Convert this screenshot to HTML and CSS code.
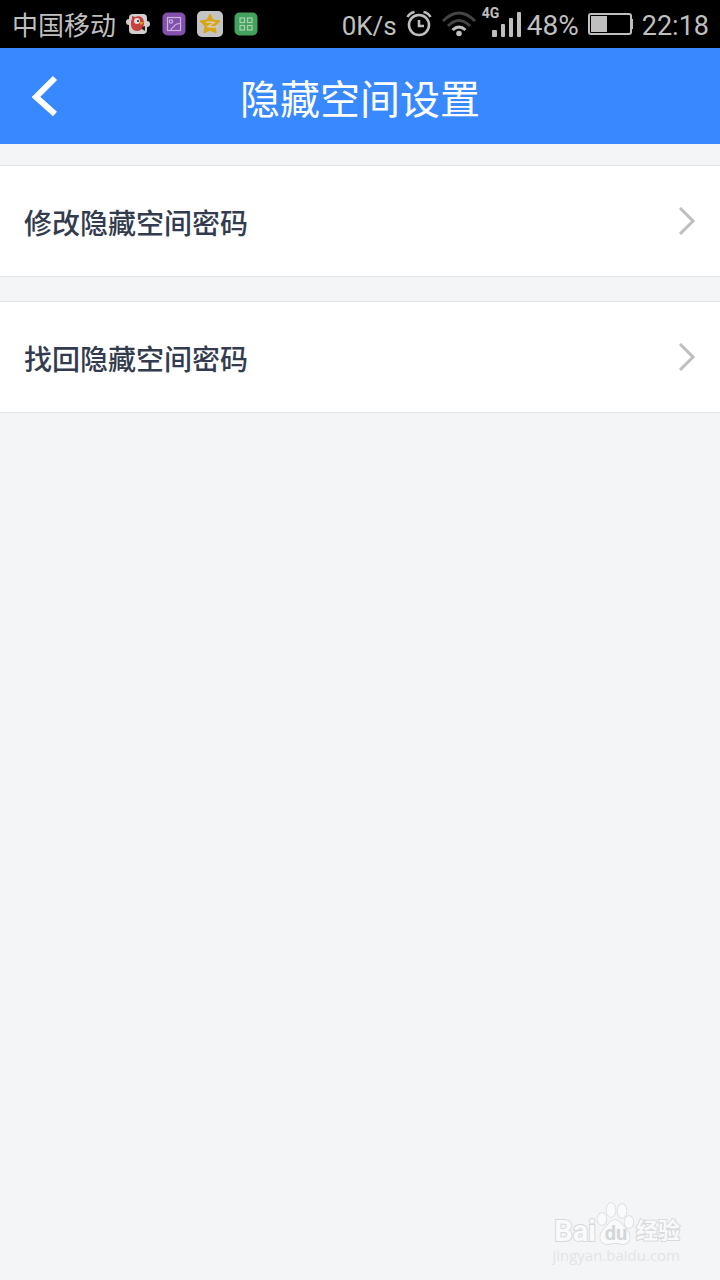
FILE: index.html
```html
<!DOCTYPE html>
<html lang="zh-CN">
<head>
<meta charset="utf-8">
<meta name="viewport" content="width=device-width, initial-scale=1">
<title>隐藏空间设置</title>
<link rel="stylesheet" href="styles.css">
</head>
<body>
<div class="status">
  <div class="status-left">
    <span class="carrier">中国移动</span>
    <svg width="24" height="24" viewBox="0 0 24 24" aria-hidden="true">
      <rect x="3" y="2" width="18" height="20" rx="4" fill="#cfcfcf"/>
      <circle cx="3" cy="10" r="3" fill="#cfcfcf"/><circle cx="21" cy="12" r="3" fill="#cfcfcf"/>
      <path d="M6 4l3 1c5-2 9 1 9 6s-3 8-7 8-6-3-6-7c0-2 0-4 1-5z" fill="#c8403c"/>
      <circle cx="11" cy="9" r="3" fill="#dedede"/>
      <circle cx="12" cy="9" r="1" fill="#222"/><path d="M13 10l5 0-3 3z" fill="#d9a020"/>
      <path d="M16 15l3-1v5l-3-2z" fill="#222"/>
    </svg>
    <svg width="24" height="24" viewBox="0 0 24 24" aria-hidden="true">
      <rect x="0.500" y="0.500" width="23" height="23" rx="5" fill="#8450ae"/>
      <g fill="none" stroke="#c9b3d9" stroke-width="1.200"><rect x="5.500" y="5.500" width="13" height="13"/><circle cx="9" cy="9.500" r="1.700"/><path d="M9 18.500c0-2 1-3 3-4 1-2 3-3 6-3"/></g>
    </svg>
    <svg class="star" width="26" height="26" viewBox="0 0 26 26" aria-hidden="true">
      <rect width="26" height="26" rx="5" fill="#c4c4c4"/>
      <path d="M13 3l3 6 7 1-5 5 1 7-6-3-6 3 1-7-5-5 7-1z" fill="#d9a515" stroke="#d9a515" stroke-linejoin="round"/>
      <path d="M9 11.500q4-1 8 0l-6 4q4 1 9 0" fill="none" stroke="#d4cdbb" stroke-width="1.500"/>
    </svg>
    <svg width="24" height="24" viewBox="0 0 24 24" aria-hidden="true">
      <rect x="0.500" y="0.500" width="23" height="23" rx="5" fill="#43a25c"/>
      <g fill="none" stroke="#a9d0b3" stroke-width="1.200"><rect x="6" y="6" width="4.500" height="4.500"/><rect x="13.500" y="6" width="4.500" height="4.500"/><rect x="6" y="13.500" width="4.500" height="4.500"/><rect x="13.500" y="13.500" width="4.500" height="4.500"/></g>
    </svg>
  </div>
  <div class="status-right">
    <span class="speed">0K/s</span>
    <svg class="alarm" width="26" height="28" viewBox="0 0 26 28" aria-label="闹钟">
      <g fill="none" stroke="#bfbfbf" stroke-width="2.600"><circle cx="13" cy="15" r="10"/><path d="M13 10v6h5M1.500 7q2-4 7-5M24.500 7q-2-4-7-5"/></g>
    </svg>
    <svg class="wifi" width="34" height="26" viewBox="0 0 34 26" aria-label="WLAN">
      <g fill="none" stroke-width="3"><path d="M1 10Q17-6 33 10M6 15Q17 4 28 15" stroke="#444"/><path d="M10.500 19Q17 13 23.500 19" stroke="#bfbfbf"/></g><circle cx="17" cy="22.500" r="2.800" fill="#bfbfbf"/>
    </svg>
    <span class="signal">
      <svg width="40" height="32" viewBox="0 0 40 32" aria-hidden="true"><g fill="#bfbfbf"><rect x="10" y="22" width="5" height="7" rx="1"/><rect x="19" y="16" width="4" height="13" rx="1"/><rect x="27" y="10" width="4" height="19" rx="1"/><rect x="35" y="4" width="4" height="25" rx="1"/></g></svg>
      <span class="network">4G</span>
    </span>
    <span class="percent">48%</span>
    <svg class="battery" width="46" height="22" viewBox="0 0 46 22" aria-hidden="true"><rect x="1" y="1" width="42" height="20" rx="2" fill="none" stroke="#bfbfbf" stroke-width="2"/><path d="M43 6h2v10h-2z" fill="#bfbfbf"/><path d="M3 3h16v16H3z" fill="#bfbfbf"/></svg>
    <time class="clock">22:18</time>
  </div>
</div>
<header class="header">
  <button class="back" type="button" aria-label="返回"><svg width="26" height="42" viewBox="0 0 26 42"><path d="M23 3L4 22l19 17" fill="none" stroke="#fff" stroke-width="6"/></svg></button>
  <h1 class="title">隐藏空间设置</h1>
</header>
<main class="list">
  <a class="row" href="#change"><span class="label">修改隐藏空间密码</span><svg width="18" height="28" viewBox="0 0 18 28" aria-hidden="true"><path d="M2 1l13 13L2 27" fill="none" stroke="#bfbfbf" stroke-width="3"/></svg></a>
  <a class="row" href="#recover"><span class="label">找回隐藏空间密码</span><svg width="18" height="28" viewBox="0 0 18 28" aria-hidden="true"><path d="M2 1l13 13L2 27" fill="none" stroke="#bfbfbf" stroke-width="3"/></svg></a>
</main>
<div class="watermark">
  <div class="brand">
    <span class="bai">Bai</span>
    <span class="paw">
      <svg width="40" height="44" viewBox="0 0 40 44" aria-hidden="true"><g fill="#f9fafb" stroke="#d8d9db" stroke-width="1.500"><ellipse cx="6" cy="17" rx="4.500" ry="6"/><ellipse cx="15" cy="8" rx="4.500" ry="7"/><ellipse cx="26" cy="9" rx="4.500" ry="7"/><ellipse cx="33" cy="20" rx="4.500" ry="6"/><path d="M19 18c5 0 6 4 10 8 7 6 6 16-2 16-4 0-5-1-8-1s-4 1-8 1c-8 0-9-10-2-16 4-4 5-8 10-8z"/></g></svg>
      <span class="du">du</span>
    </span>
    <span class="exp">经验</span>
  </div>
  <div class="site">jingyan.baidu.com</div>
</div>
</body>
</html>
```
FILE: styles.css
```css
* { box-sizing: border-box; }

body {
  position: relative;
  margin: 0;
  min-height: 100vh;
  background: #f4f5f7;
  font-family: Roboto, "Noto Sans CJK SC", sans-serif;
}

svg { display: block; flex: none; }

.status {
  display: flex;
  justify-content: space-between;
  align-items: center;
  height: 48px;
  padding: 0 11px 0 12px;
  background: #000;
  color: #bfbfbf;
  font-size: 28px;
  line-height: 44px;
  white-space: nowrap;
}

.status-left, .status-right { display: flex; align-items: center; }
.status-left { gap: 12px; }
.carrier, .speed, .percent, .clock { padding-top: 4px; }
.carrier { font-size: 26px; margin-right: -2px; }
.speed { font-size: 26px; }
.star { margin: 0 -1px; }
.alarm { margin-left: 9px; }
.wifi { margin-left: 10px; }
.signal { position: relative; margin: 0 5px 0 6px; }
.network {
  position: absolute;
  top: -2px;
  left: 0;
  font-size: 14px;
  font-weight: 700;
  line-height: 14px;
}
.battery { margin: 0 8px 0 9px; }
.clock { font-size: 27px; }

.header {
  display: grid;
  grid-template-columns: 96px 1fr 96px;
  align-items: center;
  height: 96px;
  background: #3888ff;
  color: #fff;
}

.back {
  display: flex;
  align-items: center;
  height: 96px;
  padding: 0 32px;
  border: 0;
  background: none;
}

.title {
  margin: 0;
  padding-top: 10px;
  font-size: 40px;
  font-weight: 400;
  line-height: 60px;
  text-align: center;
}

.list {
  display: flex;
  flex-direction: column;
  gap: 24px;
  padding-top: 21px;
}

.row {
  display: flex;
  justify-content: space-between;
  align-items: center;
  height: 112px;
  padding: 0 24px;
  border: solid #e2e3e5;
  border-width: 1px 0;
  background: #fff;
  color: #333c4f;
  font-size: 28px;
  font-weight: 500;
  line-height: 40px;
  text-decoration: none;
}

.label { padding-top: 7px; }

.watermark {
  position: absolute;
  right: 40px;
  bottom: 16px;
  display: flex;
  flex-direction: column;
  align-items: flex-end;
  color: #f9fafb;
  -webkit-text-stroke: 2px #d8d9db;
  paint-order: stroke fill;
}

.brand {
  display: flex;
  align-items: flex-end;
  font-size: 29px;
  font-weight: 700;
  line-height: 30px;
}

.paw { position: relative; }
.du {
  position: absolute;
  left: 0;
  right: 0;
  bottom: 3px;
  color: #d4d5d7;
  font-size: 20px;
  line-height: 20px;
  text-align: center;
  -webkit-text-stroke: 0;
}
.exp { font-size: 22px; }

.site {
  color: #e3e4e6;
  font-family: "Open Sans", sans-serif;
  font-size: 15px;
  line-height: 18px;
  -webkit-text-stroke: 0;
}
```
